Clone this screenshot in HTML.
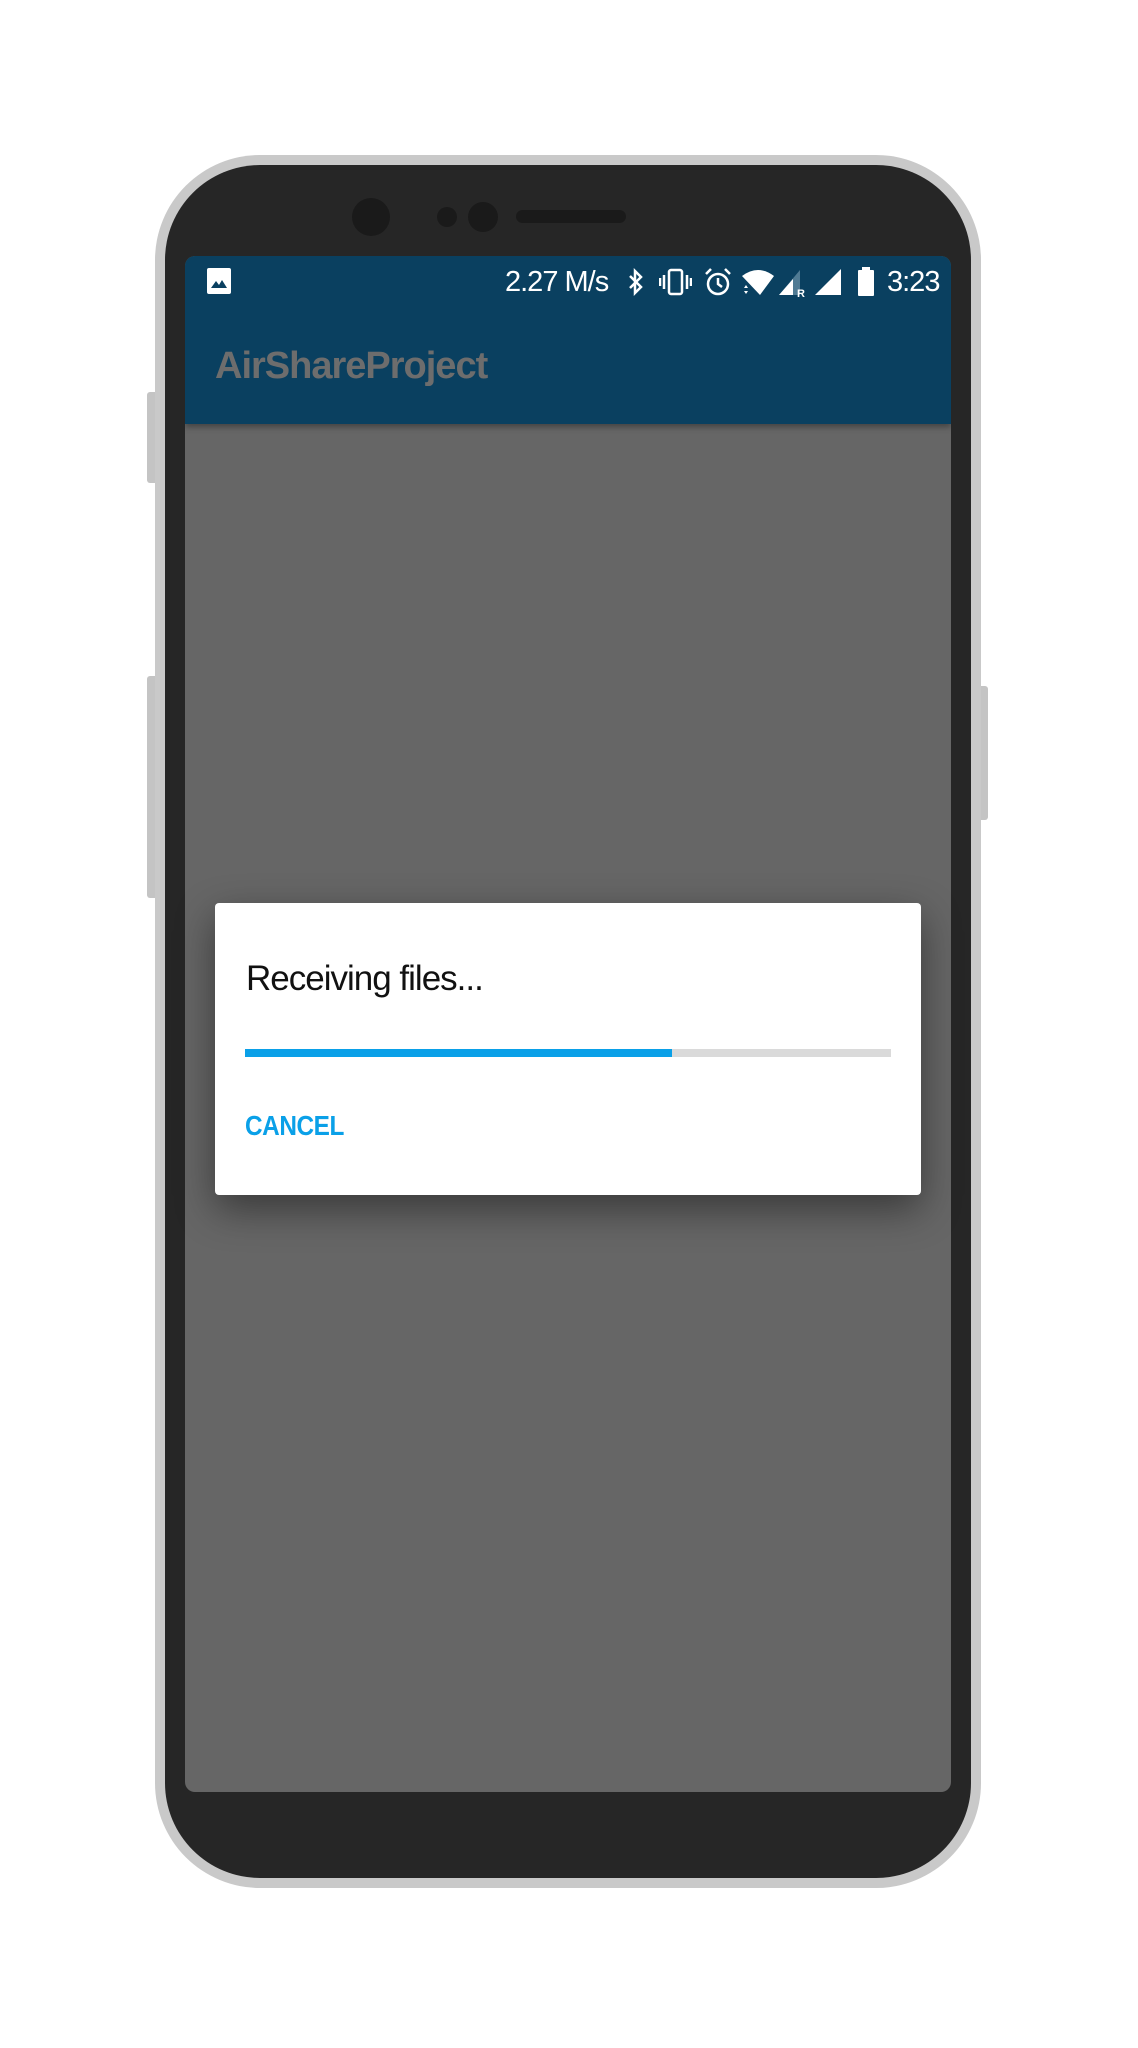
<!DOCTYPE html>
<html><head><meta charset="utf-8"><style>
html,body{margin:0;padding:0;background:#fff;}
body{width:1138px;height:2048px;position:relative;overflow:hidden;font-family:"Liberation Sans",sans-serif;}
.a{position:absolute;}
</style></head><body>
<!-- side buttons -->
<div class="a" style="left:147px;top:392px;width:12px;height:91px;background:#c4c4c4;border-radius:3px"></div>
<div class="a" style="left:147px;top:676px;width:12px;height:222px;background:#c4c4c4;border-radius:3px"></div>
<div class="a" style="left:976px;top:686px;width:12px;height:134px;background:#c4c4c4;border-radius:3px"></div>
<!-- frame -->
<div class="a" style="left:155px;top:155px;width:826px;height:1733px;background:#c9c9c9;border-radius:105px"></div>
<div class="a" style="left:165px;top:165px;width:806px;height:1713px;background:#262626;border-radius:95px"></div>
<!-- camera / speaker -->
<div class="a" style="left:352px;top:198px;width:38px;height:38px;border-radius:50%;background:#1a1a1a"></div>
<div class="a" style="left:437px;top:207px;width:20px;height:20px;border-radius:50%;background:#1a1a1a"></div>
<div class="a" style="left:468px;top:202px;width:30px;height:30px;border-radius:50%;background:#1a1a1a"></div>
<div class="a" style="left:516px;top:210px;width:110px;height:13px;border-radius:7px;background:#1a1a1a"></div>
<!-- screen -->
<div class="a" style="left:185px;top:256px;width:766px;height:1536px;background:#666;border-radius:10px;overflow:hidden">
  <div class="a" style="left:0;top:0;width:766px;height:168px;background:#0a4060;box-shadow:0 3px 6px rgba(0,0,0,.35)"></div>
  <svg class="a" style="left:22px;top:12px" width="24" height="26" viewBox="0 0 24 26"><rect x="0" y="0" width="24" height="26" rx="2" fill="#fff"/><path d="M4 20 L9 13 L12 17 L15 12 L20 20 Z" fill="#0a4060"/></svg>
  <div class="a" style="left:320px;top:10px;color:#fff;font-size:29px;letter-spacing:-1px">2.27 M/s</div>
  <svg class="a" style="left:442px;top:12px" width="18" height="28" viewBox="0 0 18 28"><path d="M3 8 L14 19 L8 25 V3 L14 9 L3 20" fill="none" stroke="#fff" stroke-width="2.5"/></svg>
  <svg class="a" style="left:474px;top:12px" width="33" height="28" viewBox="0 0 33 28"><rect x="10" y="2" width="13" height="24" rx="2" fill="none" stroke="#fff" stroke-width="2.5"/><path d="M5 7V21M1 10V18M28 7V21M32 10V18" stroke="#fff" stroke-width="2.5"/></svg>
  <svg class="a" style="left:519px;top:11px" width="28" height="30" viewBox="0 0 28 30"><circle cx="14" cy="17" r="10" fill="none" stroke="#fff" stroke-width="2.5"/><path d="M14 11V17L18 20M2 7L7 2M26 7L21 2" fill="none" stroke="#fff" stroke-width="2.5"/></svg>
  <svg class="a" style="left:556px;top:12px" width="34" height="28" viewBox="0 0 34 28"><path d="M1 8 Q17 -4 33 8 L19 27 Z" fill="#fff"/><path d="M3 20l2-3 2 3zM3 23l2 3 2-3z" fill="#fff"/></svg>
  <svg class="a" style="left:594px;top:12px" width="28" height="30" viewBox="0 0 28 30"><path d="M0 27 L21 2 V27Z" fill="#4f7a93"/><path d="M0 27 L14 11 V27Z" fill="#fff"/><text x="18" y="29" font-size="11" fill="#fff" font-family="Liberation Sans" font-weight="bold">R</text></svg>
  <svg class="a" style="left:630px;top:12px" width="27" height="28" viewBox="0 0 27 28"><path d="M0 27 L26 1 V27Z" fill="#fff"/></svg>
  <svg class="a" style="left:672px;top:11px" width="18" height="30" viewBox="0 0 18 30"><rect x="5" y="0" width="8" height="4" fill="#fff"/><rect x="1" y="3" width="16" height="26" rx="1" fill="#fff"/></svg>
  <div class="a" style="left:702px;top:10px;color:#fff;font-size:29px;letter-spacing:-1px">3:23</div>
  <div class="a" style="left:30px;top:89px;color:#6d6d6d;font-size:38px;font-weight:bold;letter-spacing:-1px">AirShareProject</div>
</div>
<!-- dialog -->
<div class="a" style="left:215px;top:903px;width:706px;height:292px;background:#fff;border-radius:4px;box-shadow:0 14px 40px rgba(0,0,0,.45)">
  <div class="a" style="left:31px;top:56px;color:#111;font-size:35px;letter-spacing:-1px">Receiving files...</div>
  <div class="a" style="left:30px;top:146px;width:646px;height:8px;background:#dadada"></div>
  <div class="a" style="left:30px;top:146px;width:427px;height:8px;background:#0aa0e8"></div>
  <div class="a" style="left:30px;top:207px;color:#0aa0e8;font-size:28px;font-weight:bold;letter-spacing:-.5px;transform:scaleX(.87);transform-origin:left">CANCEL</div>
</div>
</body></html>
